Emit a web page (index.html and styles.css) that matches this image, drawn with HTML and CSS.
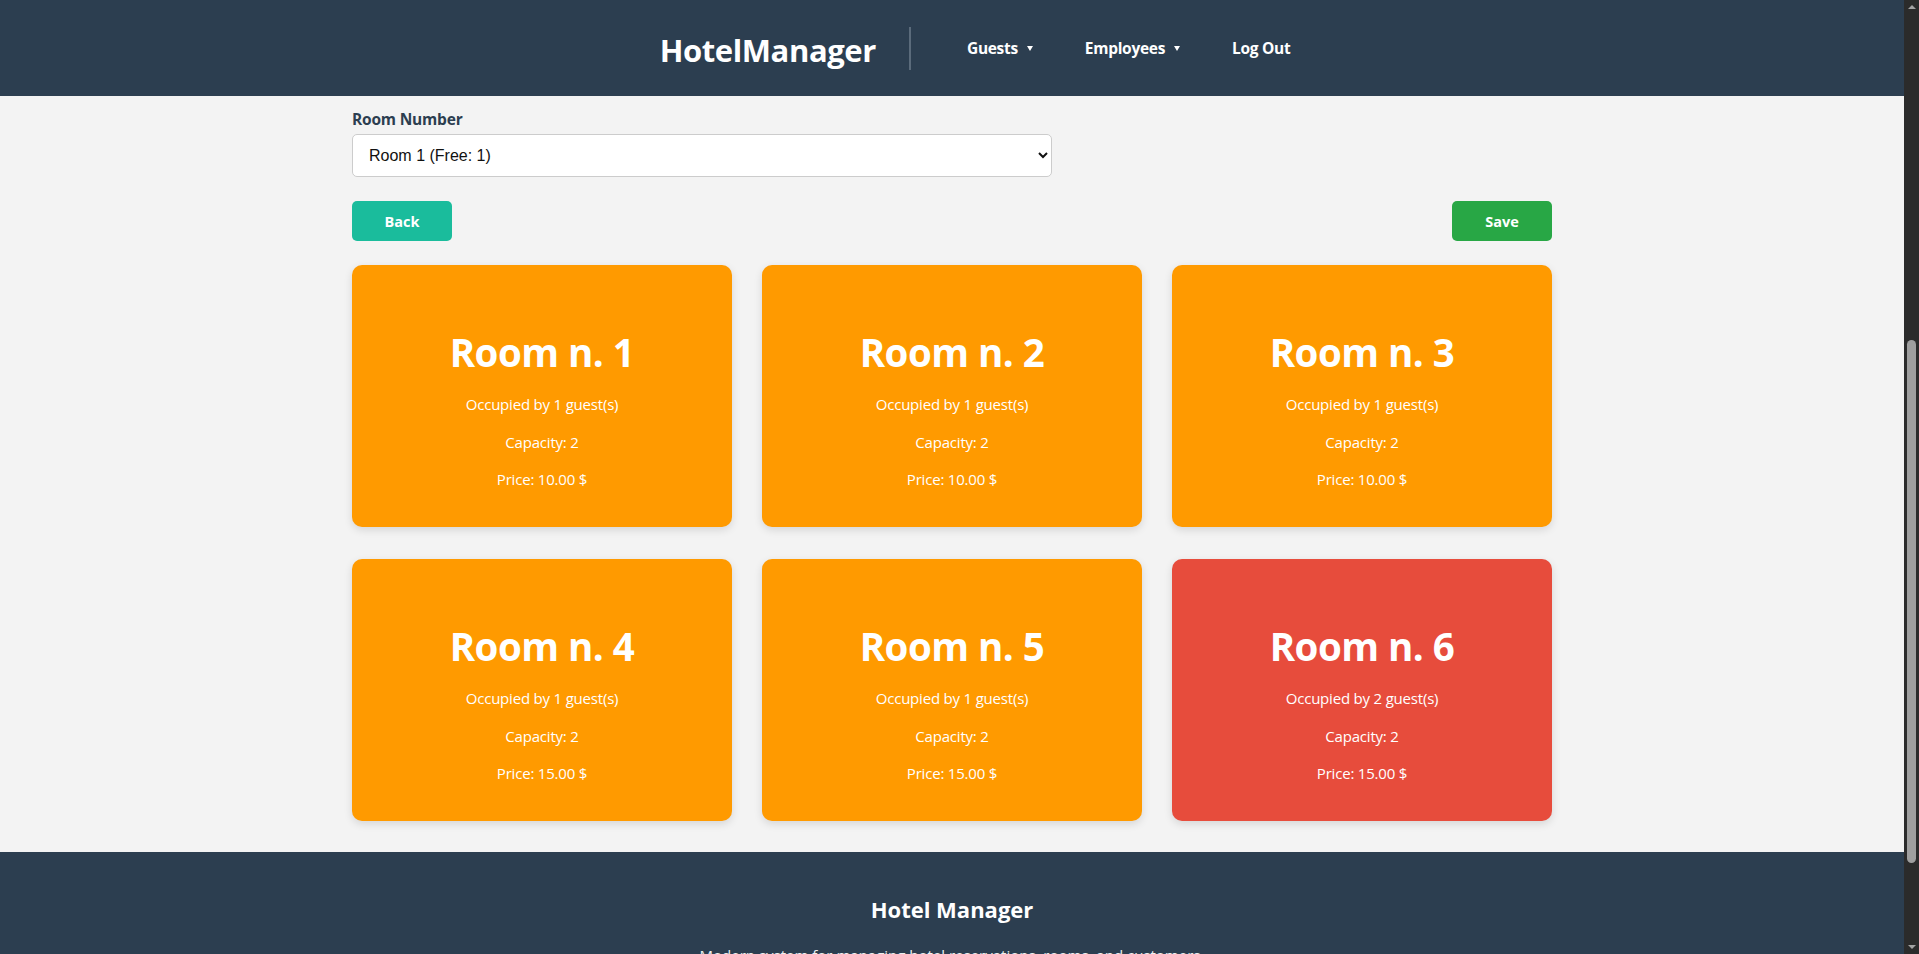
FILE: index.html
```html
<!DOCTYPE html>
<html lang="en">
<head>
<meta charset="utf-8">
<title>HotelManager</title>
<link rel="stylesheet" href="styles.css">
</head>
<body>
<div class="page">
<header class="topbar">
  <div class="topbar-inner">
    <a class="logo" href="#">HotelManager</a>
    <span class="divider"></span>
    <nav class="nav">
      <a class="nav-link" href="#">Guests <span class="caret"></span></a>
      <a class="nav-link" href="#">Employees <span class="caret"></span></a>
      <a class="nav-link" href="#">Log Out</a>
    </nav>
  </div>
</header>

<main class="container">
  <form class="room-form">
    <label class="field-label" for="room">Room Number</label>
    <select id="room" class="field-select">
      <option>Room 1 (Free: 1)</option>
      <option>Room 2 (Free: 1)</option>
      <option>Room 3 (Free: 1)</option>
    </select>
    <div class="actions">
      <a class="btn btn-back" href="#">Back</a>
      <button type="button" class="btn btn-save">Save</button>
    </div>
  </form>

  <section class="rooms">
    <div class="room-card partial">
      <h2 class="room-title">Room n. 1</h2>
      <p>Occupied by 1 guest(s)</p>
      <p>Capacity: 2</p>
      <p>Price: 10.00 $</p>
    </div>
    <div class="room-card partial">
      <h2 class="room-title">Room n. 2</h2>
      <p>Occupied by 1 guest(s)</p>
      <p>Capacity: 2</p>
      <p>Price: 10.00 $</p>
    </div>
    <div class="room-card partial">
      <h2 class="room-title">Room n. 3</h2>
      <p>Occupied by 1 guest(s)</p>
      <p>Capacity: 2</p>
      <p>Price: 10.00 $</p>
    </div>
    <div class="room-card partial">
      <h2 class="room-title">Room n. 4</h2>
      <p>Occupied by 1 guest(s)</p>
      <p>Capacity: 2</p>
      <p>Price: 15.00 $</p>
    </div>
    <div class="room-card partial">
      <h2 class="room-title">Room n. 5</h2>
      <p>Occupied by 1 guest(s)</p>
      <p>Capacity: 2</p>
      <p>Price: 15.00 $</p>
    </div>
    <div class="room-card full">
      <h2 class="room-title">Room n. 6</h2>
      <p>Occupied by 2 guest(s)</p>
      <p>Capacity: 2</p>
      <p>Price: 15.00 $</p>
    </div>
  </section>
</main>

<footer class="footer">
  <h3 class="footer-title">Hotel Manager</h3>
  <p class="footer-text">Modern system for managing hotel reservations, rooms, and customers.</p>
  <p class="footer-copy">&copy; 2024 Hotel Manager. All rights reserved.</p>
</footer>
</div>
<div class="scrollbar" aria-hidden="true">
  <span class="sb-arrow sb-up"></span>
  <div class="sb-track"><span class="sb-thumb"></span></div>
  <span class="sb-arrow sb-down"></span>
</div>
</body>
</html>
```

FILE: styles.css
```css
* {
  box-sizing: border-box;
}

html,
body {
  margin: 0;
  height: 100%;
  overflow: hidden;
}

body {
  display: flex;
  background: #f3f3f3;
  font-family: "Open Sans", "Noto Sans", sans-serif;
  color: #2c3e50;
}

.page {
  flex: 1;
  min-width: 0;
  height: 100vh;
  overflow: hidden;
}

/* window scrollbar */
.scrollbar {
  width: 15px;
  flex: none;
  height: 100vh;
  background: #2b2b2b;
  display: flex;
  flex-direction: column;
  align-items: center;
}

.sb-arrow {
  flex: none;
  width: 0;
  height: 0;
  border-left: 4px solid transparent;
  border-right: 4px solid transparent;
}

.sb-up {
  margin-top: 5px;
  border-bottom: 4px solid #a3a3a3;
}

.sb-down {
  margin-bottom: 5px;
  border-top: 4px solid #a3a3a3;
}

.sb-track {
  flex: 1;
  width: 100%;
  padding: 331px 3px 0;
}

.sb-thumb {
  display: block;
  width: 9px;
  height: 523px;
  border-radius: 5px;
  background: #9f9f9f;
}

a {
  text-decoration: none;
  color: inherit;
}

.topbar {
  background: #2c3e50;
  height: 96px;
}

.topbar-inner {
  height: 100%;
  display: flex;
  align-items: center;
  justify-content: center;
  padding-left: 46px;
}

.logo {
  color: #fff;
  font-size: 31px;
  font-weight: 700;
  letter-spacing: -0.4px;
  margin-top: 4px;
}

.divider {
  width: 2px;
  height: 43px;
  background: #5b6b7b;
  margin: 0 56px 0 33px;
}

.nav {
  display: flex;
  align-items: center;
  gap: 52px;
}

.nav-link {
  color: #fff;
  font-size: 15.5px;
  font-weight: 700;
  display: flex;
  align-items: center;
  letter-spacing: -0.3px;
}

.caret {
  width: 0;
  height: 0;
  border-left: 3px solid transparent;
  border-right: 3px solid transparent;
  border-top: 5px solid #fff;
  margin-left: 9px;
}

.container {
  width: 1200px;
  margin: 0 auto;
  padding: 12px 0 31px;
}

.room-form {
  display: flex;
  flex-direction: column;
}

.field-label {
  font-size: 15.5px;
  font-weight: 700;
  color: #2c3e50;
  line-height: 22px;
  margin-bottom: 4px;
  letter-spacing: -0.2px;
}

.field-select {
  width: 700px;
  height: 43px;
  border: 1px solid #cccccc;
  border-radius: 5px;
  background: #fff;
  font-family: "Liberation Sans", Arial, sans-serif;
  font-size: 16px;
  color: #111;
  padding: 0 12px;
}

.actions {
  display: flex;
  justify-content: space-between;
  margin-top: 24px;
}

.btn {
  width: 100px;
  height: 40px;
  border: none;
  border-radius: 5px;
  color: #fff;
  font-family: "Open Sans", "Noto Sans", sans-serif;
  font-size: 14.5px;
  font-weight: 700;
  display: flex;
  align-items: center;
  justify-content: center;
  cursor: pointer;
}

.btn-back {
  background: #1abc9c;
}

.btn-save {
  background: #28a745;
}

.rooms {
  display: grid;
  grid-template-columns: repeat(3, 1fr);
  column-gap: 30px;
  row-gap: 32px;
  margin-top: 24px;
}

.room-card {
  height: 262px;
  border-radius: 10px;
  color: #fff;
  text-align: center;
  padding-top: 63px;
  box-shadow: 0 3px 8px rgba(0, 0, 0, 0.12);
}

.room-card.partial {
  background: #ff9a00;
}

.room-card.full {
  background: #e74c3c;
}

.room-title {
  margin: 0 0 17px;
  font-size: 38.5px;
  line-height: 48px;
  font-weight: 700;
  letter-spacing: -0.5px;
}

.room-card p {
  margin: 0 0 15px;
  font-size: 15px;
  line-height: 22.5px;
  letter-spacing: -0.2px;
}

.footer {
  background: #2c3e50;
  color: #fff;
  text-align: center;
  padding: 42px 20px 40px;
}

.footer-title {
  margin: 0 0 20px;
  font-size: 22px;
  line-height: 30px;
  font-weight: 700;
}

.footer-text {
  margin: 0 0 16px;
  font-size: 15px;
  line-height: 22px;
  color: #ecf0f1;
}

.footer-copy {
  margin: 0;
  font-size: 14px;
  color: #bdc3c7;
}
```
